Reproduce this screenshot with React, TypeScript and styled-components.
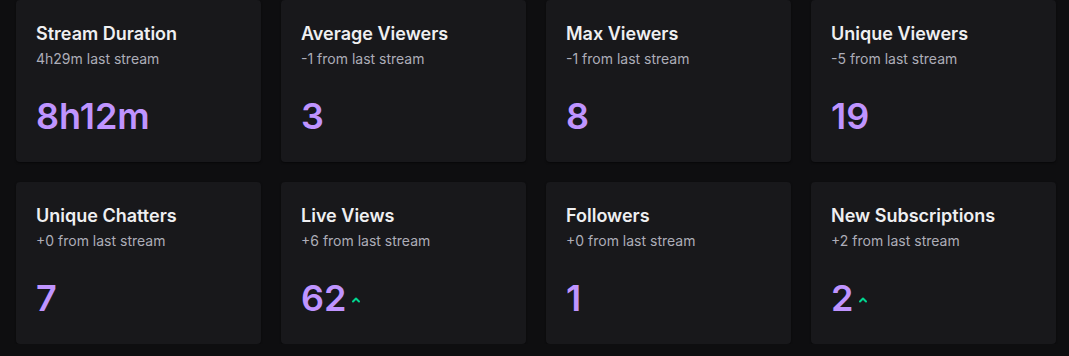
import React from "react";
import styled, { createGlobalStyle } from "styled-components";

const GlobalStyle = createGlobalStyle`
  html, body {
    margin: 0;
    padding: 0;
    background: #0e0e10;
    font-family: Inter, "Noto Sans", sans-serif;
    -webkit-font-smoothing: antialiased;
  }
`;

const Grid = styled.div`
  display: grid;
  grid-template-columns: repeat(4, 245px);
  gap: 20px;
  padding: 0 13px 0 16px;
`;

const Card = styled.div`
  background: #18181b;
  border-radius: 4px;
  height: 162px;
  box-sizing: border-box;
  padding: 22px 20px 0;
  box-shadow: 0 1px 2px rgba(0, 0, 0, 0.5);
`;

const Title = styled.div`
  color: #efeff1;
  font-size: 18px;
  font-weight: 600;
  line-height: 24px;
`;

const Sub = styled.div`
  color: #adadb8;
  font-size: 14px;
  line-height: 18px;
  margin-top: 4px;
`;

const ValueRow = styled.div`
  display: flex;
  align-items: center;
  margin-top: 28px;
`;

const Value = styled.span`
  color: #bf94ff;
  font-size: 36px;
  font-weight: 600;
  line-height: 40px;
`;

const Trend = styled.svg`
  margin-left: 5px;
  margin-top: 4px;
`;

type Stat = { title: string; sub: string; value: string; up?: boolean };

const stats: Stat[] = [
  { title: "Stream Duration", sub: "4h29m last stream", value: "8h12m" },
  { title: "Average Viewers", sub: "-1 from last stream", value: "3" },
  { title: "Max Viewers", sub: "-1 from last stream", value: "8" },
  { title: "Unique Viewers", sub: "-5 from last stream", value: "19" },
  { title: "Unique Chatters", sub: "+0 from last stream", value: "7" },
  { title: "Live Views", sub: "+6 from last stream", value: "62", up: true },
  { title: "Followers", sub: "+0 from last stream", value: "1" },
  { title: "New Subscriptions", sub: "+2 from last stream", value: "2", up: true },
];

const UpArrow = () => (
  <Trend width="10" height="8" viewBox="0 0 10 8">
    <path d="M2 5.5 L5 2.5 L8 5.5" fill="none" stroke="#00d68f" strokeWidth="2" strokeLinecap="round" strokeLinejoin="round" />
  </Trend>
);

export default function App() {
  return (
    <>
      <GlobalStyle />
      <Grid>
        {stats.map((s) => (
          <Card key={s.title}>
            <Title>{s.title}</Title>
            <Sub>{s.sub}</Sub>
            <ValueRow>
              <Value>{s.value}</Value>
              {s.up && <UpArrow />}
            </ValueRow>
          </Card>
        ))}
      </Grid>
    </>
  );
}
